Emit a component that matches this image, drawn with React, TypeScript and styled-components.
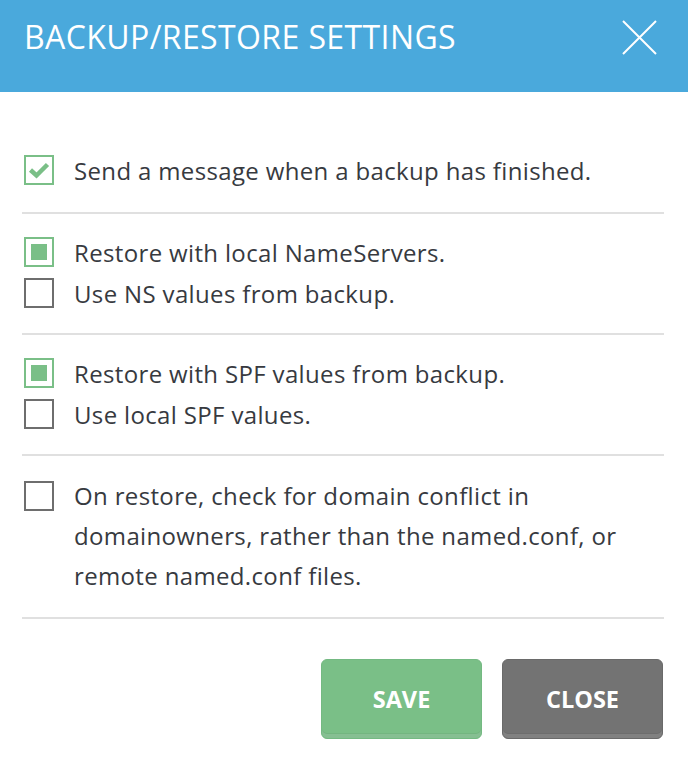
import React, { useState } from "react";
import styled, { createGlobalStyle } from "styled-components";

const GlobalStyle = createGlobalStyle`
  html, body {
    margin: 0;
    padding: 0;
    background: #fff;
  }
  body {
    font-family: "Open Sans", "Noto Sans", sans-serif;
    color: #373a3f;
  }
`;

const Dialog = styled.div`
  width: 688px;
  min-height: 762px;
  background: #fff;
`;

const Header = styled.header`
  height: 92px;
  background: #4aa9dc;
  display: flex;
  align-items: flex-start;
  justify-content: space-between;
  padding: 0 31px 0 24px;
  box-sizing: border-box;
`;

const Title = styled.h1`
  margin: 0;
  padding-top: 15px;
  font-size: 32px;
  font-weight: 400;
  line-height: 44px;
  color: #fff;
  letter-spacing: 0.4px;
`;

const CloseIcon = styled.button`
  background: none;
  border: none;
  padding: 0;
  margin-top: 20px;
  width: 35px;
  height: 35px;
  cursor: pointer;
`;

const Body = styled.div`
  padding: 58px 24px 0 22px;
`;

const Group = styled.section<{ $tall?: boolean }>`
  padding: ${({ $tall }) => ($tall ? "20px 0 21px" : "18px 0 19px")};
  border-bottom: 2px solid #e0e0e0;

  &:first-child {
    padding-top: 0;
    padding-bottom: 21px;
  }
`;

const Option = styled.label`
  display: flex;
  align-items: flex-start;
  gap: 20px;
  padding-left: 2px;
  font-size: 24px;
  font-weight: 500;
  line-height: 41px;
  letter-spacing: 0.35px;
  cursor: pointer;
`;

const Box = styled.span<{ $on: boolean }>`
  flex: none;
  width: 30px;
  height: 30px;
  margin-top: 5px;
  box-sizing: border-box;
  border: 2px solid ${({ $on }) => ($on ? "#7abf87" : "#6e6e6e")};
  display: flex;
  align-items: center;
  justify-content: center;
  background: #fff;
`;

const Dot = styled.span`
  width: 16px;
  height: 16px;
  background: #7abf87;
`;

const Text = styled.span<{ $wrap?: boolean }>`
  max-width: ${({ $wrap }) => ($wrap ? "575px" : "none")};
  line-height: ${({ $wrap }) => ($wrap ? "40px" : "41px")};
`;

const Footer = styled.div`
  display: flex;
  justify-content: flex-end;
  gap: 20px;
  padding: 40px 25px 0 0;
`;

const Button = styled.button<{ $tone: "save" | "close" }>`
  width: 161px;
  height: 80px;
  border-radius: 6px;
  border: 1px solid ${({ $tone }) => ($tone === "save" ? "#74b982" : "#6a6a6a")};
  background: ${({ $tone }) => ($tone === "save" ? "#7abf87" : "#737373")};
  box-shadow: inset 0 -4px 0 rgba(255, 255, 255, 0.14), inset 0 -5px 0 rgba(0, 0, 0, 0.05);
  color: #fff;
  font-family: "Open Sans", sans-serif;
  font-size: 23.5px;
  font-weight: 700;
  cursor: pointer;
`;

type Kind = "check" | "dot";

const Checkbox = ({ on, kind }: { on: boolean; kind: Kind }) => (
  <Box $on={on}>
    {on && kind === "check" && (
      <svg width="22" height="18" viewBox="0 0 22 18">
        <path d="M2.5 9 L8.5 14.5 L19.5 3.5" fill="none" stroke="#7abf87" strokeWidth="4.5" />
      </svg>
    )}
    {on && kind === "dot" && <Dot />}
  </Box>
);

const App: React.FC = () => {
  const [state, setState] = useState({
    notify: true,
    localNs: true,
    backupNs: false,
    backupSpf: true,
    localSpf: false,
    owners: false,
  });

  const toggle = (k: keyof typeof state) => setState({ ...state, [k]: !state[k] });

  return (
    <Dialog>
      <GlobalStyle />
      <Header>
        <Title>BACKUP/RESTORE SETTINGS</Title>
        <CloseIcon aria-label="close">
          <svg width="35" height="35" viewBox="0 0 35 35">
            <path d="M1 1 L34 34 M34 1 L1 34" stroke="#fff" strokeWidth="2" fill="none" />
          </svg>
        </CloseIcon>
      </Header>

      <Body>
        <Group>
          <Option onClick={() => toggle("notify")}>
            <Checkbox on={state.notify} kind="check" />
            <Text>Send a message when a backup has finished.</Text>
          </Option>
        </Group>

        <Group>
          <Option onClick={() => toggle("localNs")}>
            <Checkbox on={state.localNs} kind="dot" />
            <Text>Restore with local NameServers.</Text>
          </Option>
          <Option onClick={() => toggle("backupNs")}>
            <Checkbox on={state.backupNs} kind="dot" />
            <Text>Use NS values from backup.</Text>
          </Option>
        </Group>

        <Group>
          <Option onClick={() => toggle("backupSpf")}>
            <Checkbox on={state.backupSpf} kind="dot" />
            <Text>Restore with SPF values from backup.</Text>
          </Option>
          <Option onClick={() => toggle("localSpf")}>
            <Checkbox on={state.localSpf} kind="dot" />
            <Text>Use local SPF values.</Text>
          </Option>
        </Group>

        <Group $tall>
          <Option onClick={() => toggle("owners")}>
            <Checkbox on={state.owners} kind="check" />
            <Text $wrap>
              On restore, check for domain conflict in domainowners, rather than the
              named.conf, or remote named.conf files.
            </Text>
          </Option>
        </Group>
      </Body>

      <Footer>
        <Button $tone="save">SAVE</Button>
        <Button $tone="close">CLOSE</Button>
      </Footer>
    </Dialog>
  );
};

export default App;
